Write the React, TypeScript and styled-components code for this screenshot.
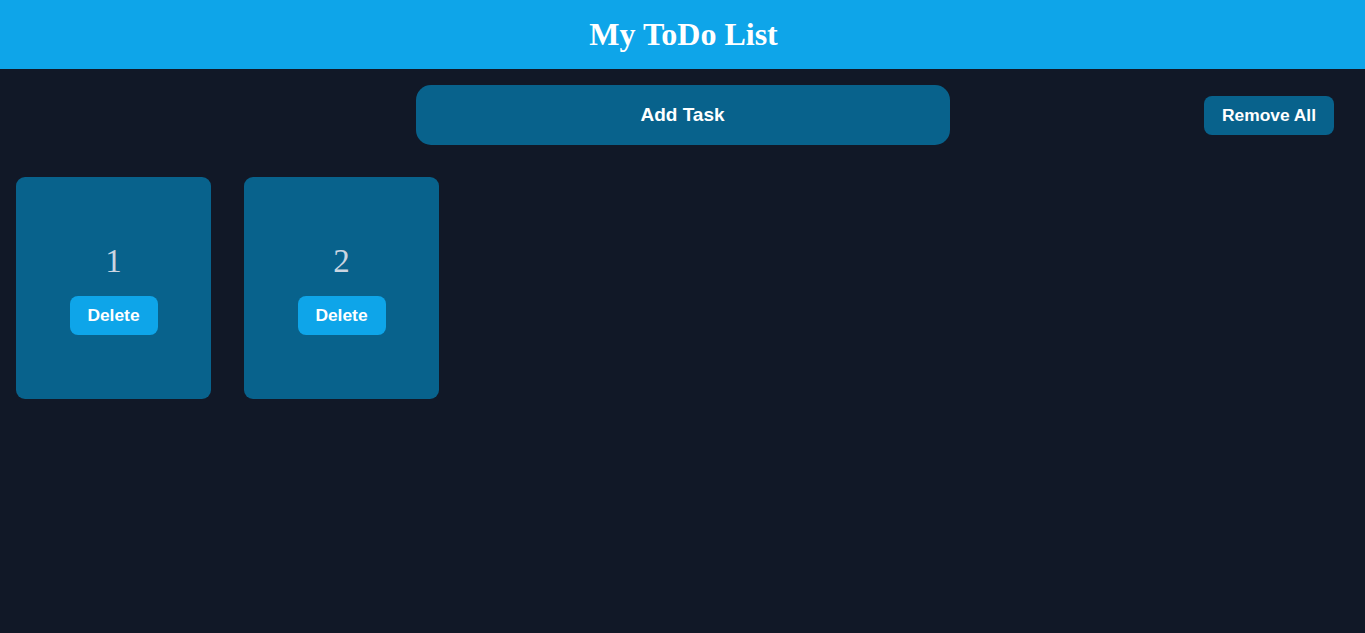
import React, { useState } from "react";
import styled, { createGlobalStyle } from "styled-components";

const Global = createGlobalStyle`
  html, body { margin: 0; padding: 0; background: #111827; }
  body { font-family: "Liberation Serif", "Times New Roman", serif; min-height: 633px; }
`;

const Page = styled.div`
  min-height: 633px;
  background: #111827;
`;

const Header = styled.header`
  background: #0ea5e9;
  height: 69px;
  display: flex;
  align-items: center;
  justify-content: center;
`;

const Title = styled.h1`
  margin: 0;
  font-family: "Liberation Serif", "Times New Roman", serif;
  font-weight: 700;
  font-size: 32px;
  color: #ffffff;
  line-height: 37px;
  transform: translateX(1px);
`;

const Toolbar = styled.div`
  display: grid;
  grid-template-columns: 1fr 534px 1fr;
  align-items: center;
  padding-top: 16px;
`;

const AddButton = styled.button`
  grid-column: 2;
  height: 60px;
  border: none;
  border-radius: 15px;
  background: #08628c;
  color: #ffffff;
  font-family: "Liberation Sans", Arial, sans-serif;
  font-weight: 700;
  font-size: 19px;
  cursor: pointer;
`;

const SmallButton = styled.button<{ $tone: "dark" | "light" }>`
  border: none;
  border-radius: 8px;
  height: 39px;
  padding: 0 17px;
  background: ${(p) => (p.$tone === "dark" ? "#08628c" : "#0ea5e9")};
  color: #ffffff;
  font-family: "Liberation Sans", Arial, sans-serif;
  font-weight: 700;
  font-size: 17.4px;
  cursor: pointer;
`;

const RemoveAll = styled(SmallButton)`
  grid-column: 3;
  justify-self: end;
  margin-right: 31px;
  width: 130px;
  padding: 0;
`;

const Cards = styled.div`
  display: flex;
  gap: 33px;
  padding: 32px 16px 0;
`;

const Card = styled.div`
  width: 195px;
  height: 222px;
  border-radius: 9px;
  background: #08628c;
  display: flex;
  flex-direction: column;
  align-items: center;
  justify-content: center;
`;

const Num = styled.div`
  font-family: "Liberation Serif", "Times New Roman", serif;
  font-size: 33px;
  line-height: 38px;
  color: #cbd5e1;
  margin-bottom: 16px;
`;

const DeleteButton = styled(SmallButton)`
  width: 88px;
  padding: 0;
`;

export default function App() {
  const [tasks, setTasks] = useState<number[]>([1, 2]);
  return (
    <Page>
      <Global />
      <Header>
        <Title>My ToDo List</Title>
      </Header>
      <Toolbar>
        <AddButton onClick={() => setTasks((t) => [...t, t.length + 1])}>Add Task</AddButton>
        <RemoveAll $tone="dark" onClick={() => setTasks([])}>Remove All</RemoveAll>
      </Toolbar>
      <Cards>
        {tasks.map((n) => (
          <Card key={n}>
            <Num>{n}</Num>
            <DeleteButton $tone="light" onClick={() => setTasks((t) => t.filter((x) => x !== n))}>
              Delete
            </DeleteButton>
          </Card>
        ))}
      </Cards>
    </Page>
  );
}
